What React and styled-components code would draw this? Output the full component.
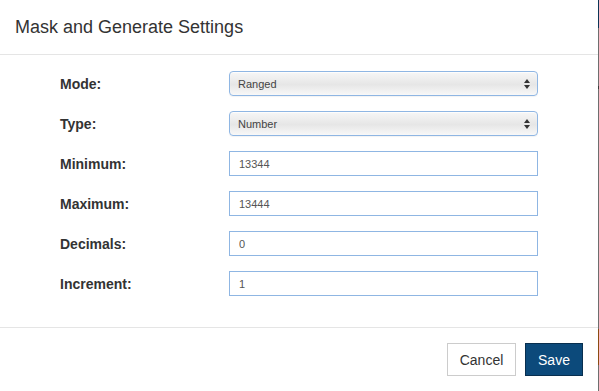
import React from "react";
import styled, { createGlobalStyle } from "styled-components";

const GlobalStyle = createGlobalStyle`
  html, body {
    margin: 0;
    padding: 0;
  }
  body {
    width: 599px;
    height: 391px;
    overflow: hidden;
    font-family: "Liberation Sans", Arial, sans-serif;
    background: linear-gradient(
      #0b3556 0px, #0b3556 28px,
      #6e6e6e 28px, #6e6e6e 86px,
      #3a3a3a 86px, #3a3a3a 89px,
      #6e6e6e 89px, #6e6e6e 329px,
      #8a4c12 329px, #8a4c12 365px,
      #6e6e6e 365px
    );
  }
`;

const Modal = styled.div`
  width: 598px;
  height: 391px;
  background: #fff;
  display: flex;
  flex-direction: column;
  color: #333;
`;

const Header = styled.div`
  padding: 15px;
  border-bottom: 1px solid #e5e5e5;
`;

const Title = styled.h4`
  margin: 0;
  font-size: 18px;
  line-height: 24px;
  font-weight: normal;
  color: #333;
`;

const Body = styled.div`
  flex: 1;
  padding: 16px 0 30px 60px;
  display: flex;
  flex-direction: column;
  gap: 15px;
`;

const Row = styled.div`
  display: grid;
  grid-template-columns: 169px 309px;
  align-items: center;
  height: 25px;
`;

const Label = styled.label`
  font-weight: bold;
  font-size: 14px;
  color: #333;
`;

const SelectWrap = styled.div`
  position: relative;
  height: 25px;
`;

const Select = styled.select`
  appearance: none;
  -webkit-appearance: none;
  width: 100%;
  height: 25px;
  box-sizing: border-box;
  border: 1px solid #8fb6e3;
  border-radius: 4px;
  padding: 0 24px 0 8px;
  font-family: "Liberation Sans", Arial, sans-serif;
  font-size: 11px;
  color: #444;
  background: linear-gradient(#f7f7f7, #e6e6e6 55%, #f8f8f8);
  box-shadow: inset 0 1px 1px rgba(255, 255, 255, 0.8), 0 1px 1px rgba(0, 0, 0, 0.05);
  outline: none;
`;

const Arrows = styled.svg`
  position: absolute;
  right: 8px;
  top: 8px;
  pointer-events: none;
`;

const Input = styled.input`
  width: 100%;
  height: 25px;
  box-sizing: border-box;
  border: 1px solid #8fb6e3;
  border-radius: 0;
  padding: 0 9px;
  font-family: "Liberation Sans", Arial, sans-serif;
  font-size: 11px;
  color: #555;
  background: #fff;
  outline: none;
`;

const Footer = styled.div`
  border-top: 1px solid #e5e5e5;
  padding: 15px;
  display: flex;
  justify-content: flex-end;
  gap: 9px;
`;

const Button = styled.button`
  height: 33px;
  box-sizing: border-box;
  padding: 0 11px;
  font-family: "Liberation Sans", Arial, sans-serif;
  font-size: 14px;
  border-radius: 0;
  cursor: pointer;
  border: 1px solid ${(p) => (p.$primary ? "#082f4f" : "#cccccc")};
  background: ${(p) => (p.$primary ? "#0c4a7b" : "#fff")};
  color: ${(p) => (p.$primary ? "#fff" : "#333")};
  width: ${(p) => p.$width}px;
`;

function SelectField({ value }) {
  return (
    <SelectWrap>
      <Select defaultValue={value}>
        <option>{value}</option>
      </Select>
      <Arrows width="6" height="10" viewBox="0 0 6 10">
        <path d="M3 0 L6 4 L0 4 Z" fill="#333" />
        <path d="M0 6 L6 6 L3 10 Z" fill="#333" />
      </Arrows>
    </SelectWrap>
  );
}

const fields = [
  { label: "Mode:", type: "select", value: "Ranged" },
  { label: "Type:", type: "select", value: "Number" },
  { label: "Minimum:", type: "input", value: "13344" },
  { label: "Maximum:", type: "input", value: "13444" },
  { label: "Decimals:", type: "input", value: "0" },
  { label: "Increment:", type: "input", value: "1" },
];

export default function App() {
  return (
    <>
      <GlobalStyle />
      <Modal>
        <Header>
          <Title>Mask and Generate Settings</Title>
        </Header>
        <Body>
          {fields.map((f) => (
            <Row key={f.label}>
              <Label>{f.label}</Label>
              {f.type === "select" ? (
                <SelectField value={f.value} />
              ) : (
                <Input defaultValue={f.value} />
              )}
            </Row>
          ))}
        </Body>
        <Footer>
          <Button $width={69}>Cancel</Button>
          <Button $primary $width={58}>Save</Button>
        </Footer>
      </Modal>
    </>
  );
}
